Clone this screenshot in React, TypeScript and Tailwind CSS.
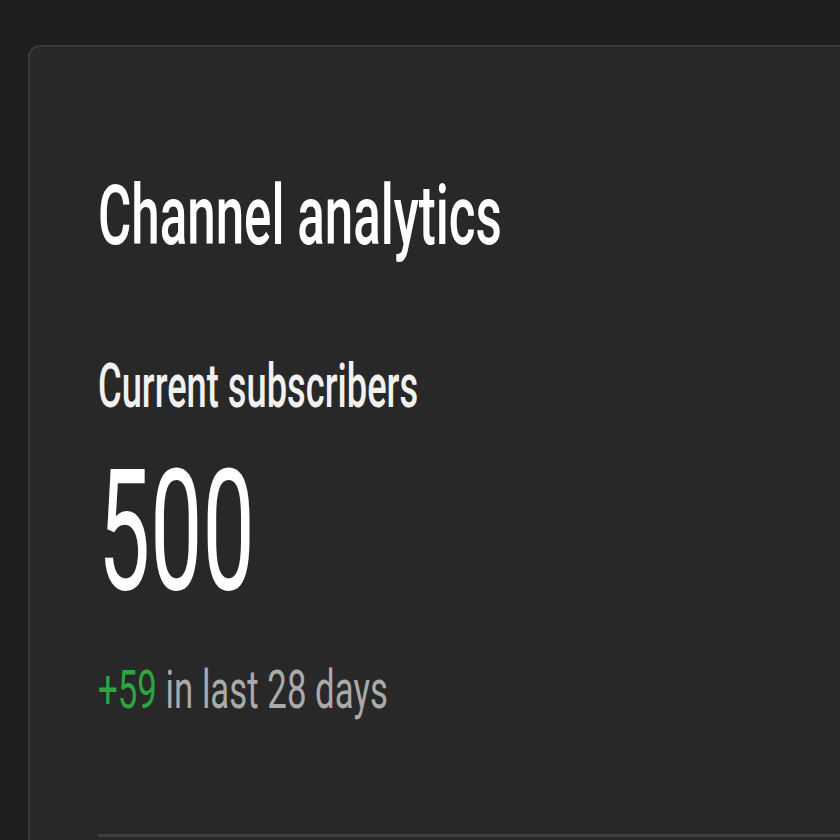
import React from "react";

export default function App() {
  return (
    <div
      className="w-[840px] h-[840px] overflow-hidden bg-[#1f1f1f] pl-[28px] pt-[45px]"
      style={{ fontFamily: "Roboto, 'Liberation Sans', sans-serif" }}
    >
      <div className="h-[900px] w-[900px] rounded-[12px] border-[2px] border-[#3a3a3a] bg-[#282828] pl-[68px] pt-[127px]">
        <div className="flex flex-col">
          <div className="h-[84px] whitespace-nowrap text-[84px] leading-none font-medium text-white origin-left scale-x-[0.608]">
            Channel analytics
          </div>
          <div className="mt-[97px] h-[62px] whitespace-nowrap text-[62px] leading-none font-medium text-[#f1f1f1] origin-left scale-x-[0.585]">
            Current subscribers
          </div>
          <div className="mt-[30px] h-[169px] whitespace-nowrap text-[169px] leading-none text-white origin-left scale-x-[0.55]">
            500
          </div>
          <div className="mt-[47px] h-[54px] whitespace-nowrap text-[54px] leading-none text-[#aaaaaa] origin-left scale-x-[0.645]">
            <span className="text-[#2ba640]">+59</span> in last 28 days
          </div>
          <div className="mt-[117px] h-[3px] w-[800px] bg-[#3e3e3e]" />
        </div>
      </div>
    </div>
  );
}
